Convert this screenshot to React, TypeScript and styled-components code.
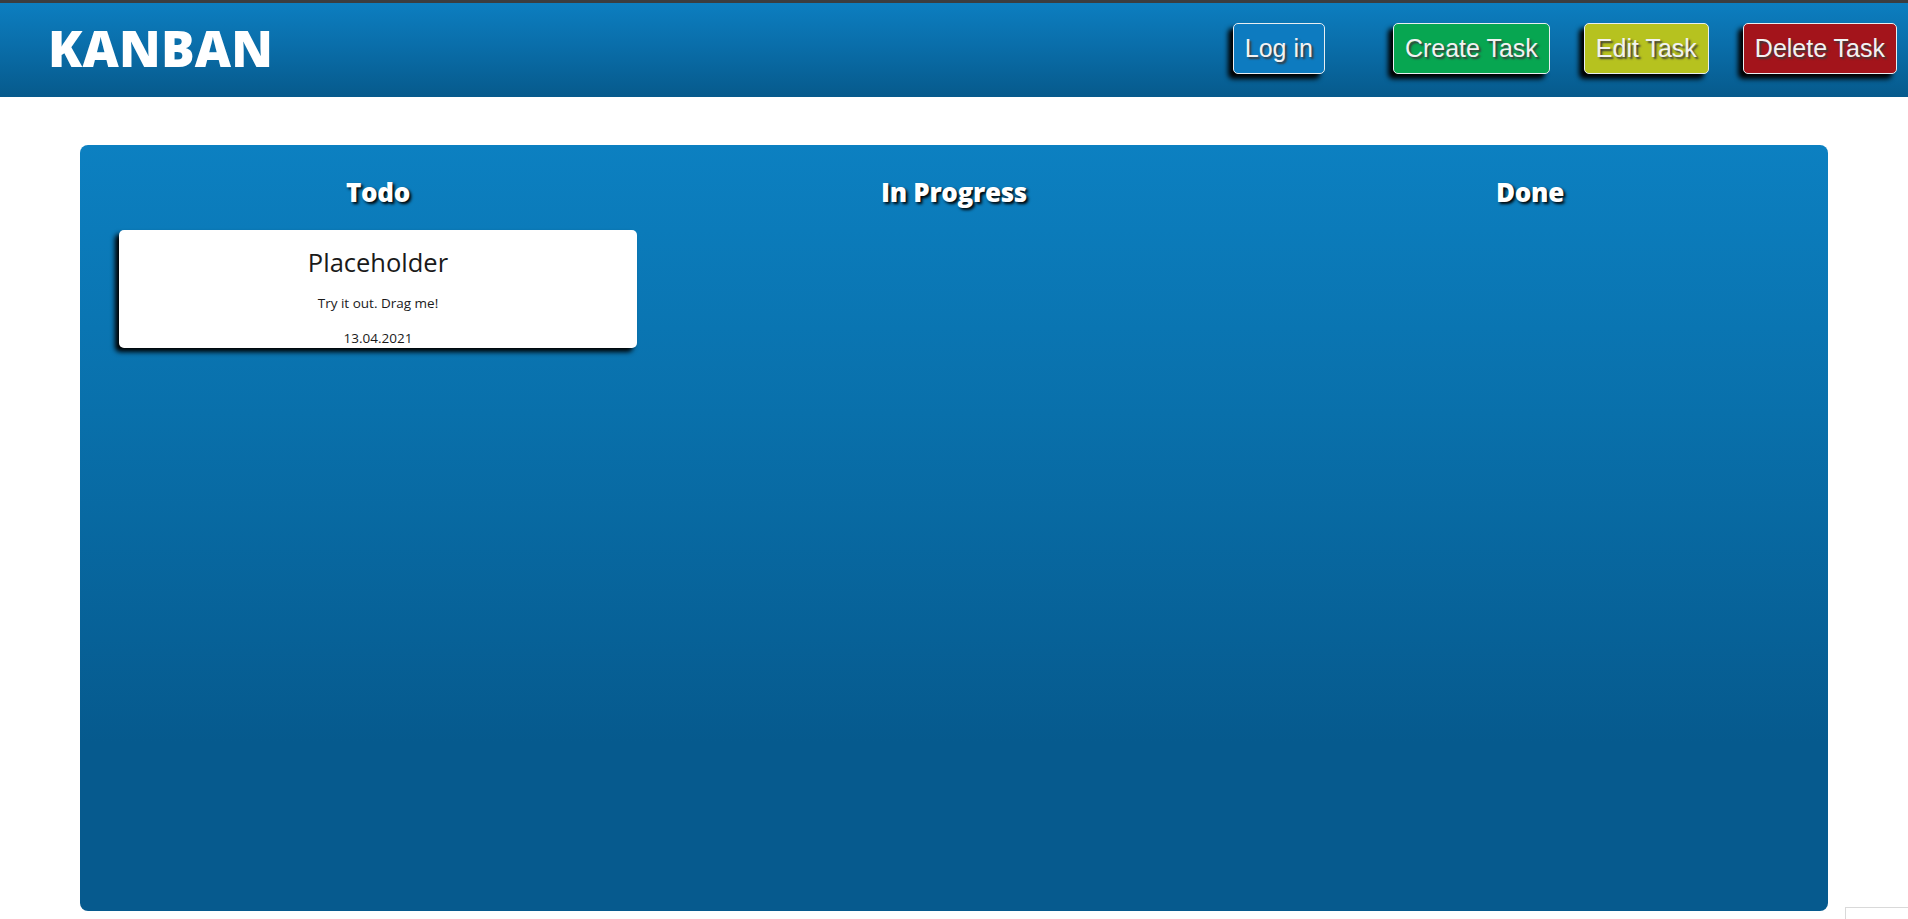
import React from "react";
import styled, { createGlobalStyle } from "styled-components";

const GlobalStyle = createGlobalStyle`
  html, body {
    margin: 0;
    padding: 0;
    background: #ffffff;
    overflow: hidden;
  }
  * { box-sizing: border-box; }
`;

const Page = styled.div`
  position: relative;
  width: 100%;
  min-height: 100vh;
  background: #ffffff;
`;

const Header = styled.header`
  display: flex;
  align-items: center;
  justify-content: space-between;
  height: 97px;
  border-top: 3px solid #3b3d40;
  padding: 0 11px 4px 48px;
  background: linear-gradient(to bottom, #0c7ec0 0%, #0a6eaa 45%, #065a8c 100%);
`;

const Logo = styled.h1`
  margin: 0;
  font-family: "Open Sans", "Noto Sans", sans-serif;
  font-weight: 800;
  font-size: 50px;
  line-height: 1;
  color: #ffffff;
  letter-spacing: 0.2px;
`;

const Nav = styled.nav`
  display: flex;
  align-items: center;
  gap: 34px;
`;

const Button = styled.button<{ $bg: string; $extraGap?: boolean }>`
  height: 51px;
  padding: 0 11px;
  margin-right: ${(p) => (p.$extraGap ? "34px" : "0")};
  font-family: "Liberation Sans", Arial, sans-serif;
  font-size: 25px;
  color: #f2f2f2;
  background: ${(p) => p.$bg};
  border: 1px solid #e8eef2;
  border-radius: 5px;
  box-shadow: -5px 5px 5px #000000;
  text-shadow: 2px 2px 2px #3a3a3a;
  cursor: pointer;
`;

const Board = styled.main`
  display: grid;
  grid-template-columns: repeat(3, 1fr);
  height: 766px;
  margin: 48px 80px 8px;
  padding: 0 10px;
  border-radius: 8px;
  background: linear-gradient(to bottom, #0c80c1 0%, #0970ab 35%, #065a8e 78%, #065a8e 100%);
`;

const Column = styled.section`
  display: flex;
  flex-direction: column;
  align-items: center;
  padding-top: 31px;
`;

const ColumnTitle = styled.h2`
  margin: 0;
  font-family: "Open Sans", "Noto Sans", sans-serif;
  font-weight: 800;
  font-size: 26px;
  line-height: 32px;
  color: #ffffff;
  letter-spacing: -0.3px;
  text-shadow: 2px 2px 3px #000000;
`;

const Card = styled.article`
  width: 90%;
  height: 118px;
  margin-top: 22px;
  padding-top: 14px;
  display: flex;
  flex-direction: column;
  align-items: center;
  background: #ffffff;
  border-radius: 5px;
  box-shadow: -4px 4px 5px #000000;
  font-family: "Open Sans", "Noto Sans", sans-serif;
  color: #1a1a1a;
  overflow: hidden;
`;

const CardTitle = styled.h3`
  margin: 0;
  font-size: 25.5px;
  font-weight: 400;
  line-height: 36px;
`;

const CardText = styled.p<{ $gap: number }>`
  margin: ${(p) => p.$gap}px 0 0;
  font-size: 13.5px;
  line-height: 18px;
`;

const Corner = styled.div`
  position: absolute;
  left: 1845px;
  top: 907px;
  width: 80px;
  height: 30px;
  background: #ffffff;
  border: 1px solid #d9d9d9;
`;

const columns = [
  { title: "Todo", cards: [{ title: "Placeholder", text: "Try it out. Drag me!", date: "13.04.2021" }] },
  { title: "In Progress", cards: [] as { title: string; text: string; date: string }[] },
  { title: "Done", cards: [] as { title: string; text: string; date: string }[] },
];

export default function App() {
  return (
    <Page>
      <GlobalStyle />
      <Header>
        <Logo>KANBAN</Logo>
        <Nav>
          <Button $bg="#0d7bc0" $extraGap>Log in</Button>
          <Button $bg="#07a651">Create Task</Button>
          <Button $bg="#b6c21f">Edit Task</Button>
          <Button $bg="#a3141b">Delete Task</Button>
        </Nav>
      </Header>
      <Board>
        {columns.map((col) => (
          <Column key={col.title}>
            <ColumnTitle>{col.title}</ColumnTitle>
            {col.cards.map((c) => (
              <Card key={c.title}>
                <CardTitle>{c.title}</CardTitle>
                <CardText $gap={14}>{c.text}</CardText>
                <CardText $gap={17}>{c.date}</CardText>
              </Card>
            ))}
          </Column>
        ))}
      </Board>
      <Corner />
    </Page>
  );
}
